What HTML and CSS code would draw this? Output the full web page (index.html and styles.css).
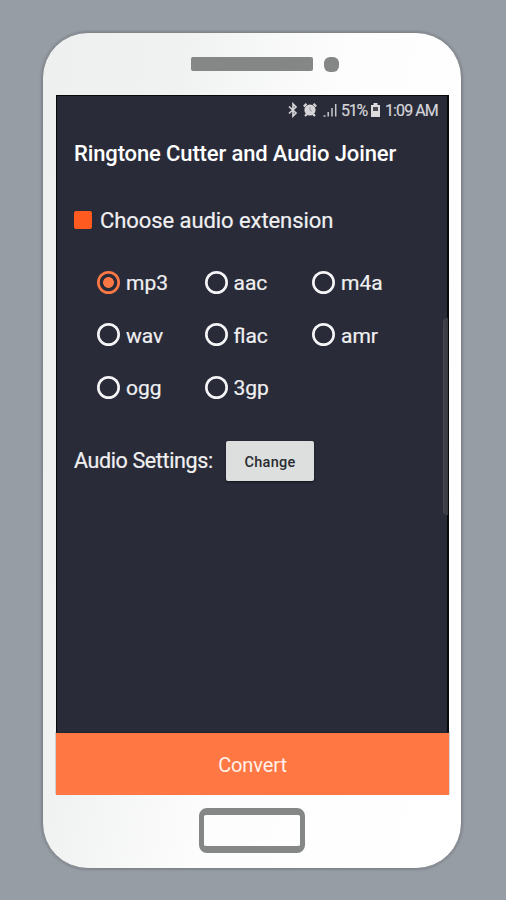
FILE: index.html
```html
<!DOCTYPE html>
<html lang="en">
<head>
<meta charset="utf-8">
<title>Ringtone Cutter and Audio Joiner</title>
<link rel="stylesheet" href="styles.css">
</head>
<body>
<div class="phone">
  <div class="earpiece"><span class="speaker"></span><span class="camera"></span></div>
  <div class="screen">
    <div class="status">
      <svg class="bt" width="10" height="16" viewBox="0 0 10 16"><path d="M1 4.5 8 11 5 14V2L8 5 1 11.5" fill="none" stroke="#d5d5d8" stroke-width="1.7"/></svg>
      <svg class="alarm" width="14" height="14" viewBox="0 0 14 14"><circle cx="7" cy="7" r="5.6" fill="#d5d5d8"/><path d="M.8 3.5 3.5.8M13.2 3.5 10.5.8M2 13l2-2M12 13l-2-2" stroke="#d5d5d8" stroke-width="2.2"/><path d="M7 4v3.2l2 1.2" fill="none" stroke="#9a9ba2" stroke-width="1"/></svg>
      <svg class="signal" width="14" height="14" viewBox="0 0 14 14"><path d="M.5 13h2M5.2 13.500V9M9 13.500V5M12.700 13.500V1" fill="none" stroke="#c8c8cc" stroke-width="1.5"/></svg>
      <span class="percent">51%</span>
      <svg class="battery" width="9" height="14" viewBox="0 0 9 14"><path d="M2.500 0h4v2H9v12H0V2h2.500z" fill="#dcdcdf"/><path d="M2 4h5v4H2z" fill="#4d4e58"/></svg>
      <span class="time">1:09 AM</span>
    </div>
    <h1 class="title"><span>Ringtone Cutter and Audio Joiner</span></h1>
    <div class="heading"><i class="square"></i><span>Choose audio extension</span></div>
    <div class="options">
      <div class="option selected"><i></i><span>mp3</span></div>
      <div class="option"><i></i><span>aac</span></div>
      <div class="option"><i></i><span>m4a</span></div>
      <div class="option"><i></i><span>wav</span></div>
      <div class="option"><i></i><span>flac</span></div>
      <div class="option"><i></i><span>amr</span></div>
      <div class="option"><i></i><span>ogg</span></div>
      <div class="option"><i></i><span>3gp</span></div>
    </div>
    <div class="settings"><span>Audio Settings:</span><button class="change">Change</button></div>
    <button class="convert">Convert</button>
    <div class="edge-panel"></div>
  </div>
  <div class="home"></div>
</div>
</body>
</html>
```
FILE: styles.css
```css
* { box-sizing: border-box; }
body {
  margin: 0;
  height: 900px;
  padding: 32px 0 0 42px;
  overflow: hidden;
  background: #979da5;
  font-family: Roboto, "Liberation Sans", sans-serif;
  color: #f0f0f2;
}
.phone {
  width: 420px;
  height: 837px;
  border: 1px solid #81858a;
  border-radius: 46px;
  background: linear-gradient(100deg, #edf0ef 0%, #f0f2f1 25%, #fdfdfd 55%, #fff 100%);
  box-shadow: 0 0 3px #666b72;
  display: flex;
  flex-direction: column;
  padding-left: 13px;
}
.earpiece {
  height: 62px;
  display: flex;
  gap: 11px;
  padding: 24px 0 0 135px;
}
.speaker { width: 122px; height: 14px; border-radius: 2px; background: #858686; }
.camera { width: 15px; height: 15px; border-radius: 6px; background: #858686; }
.screen {
  position: relative;
  width: 393px;
  height: 700px;
  background: #292b38;
  border: 1px solid #08080c;
  border-width: 1px 2px 0 1px;
  display: flex;
  flex-direction: column;
}
.status {
  height: 28px;
  display: flex;
  align-items: center;
  padding-left: 231px;
  font-size: 16px;
  color: #d5d5d8;
  white-space: nowrap;
}
.status svg { flex: none; }
.alarm { margin-left: 5px; }
.signal { margin-left: 6px; }
.percent { width: 27px; margin-left: 4px; letter-spacing: -1.3px; -webkit-text-stroke: .2px; }
.battery { margin-left: 3px; }
.time { margin-left: 5px; letter-spacing: -.9px; -webkit-text-stroke: .2px; }
.title {
  margin: 0;
  height: 58px;
  padding: 17px 0 0 17px;
  font-size: 22px;
  line-height: 26px;
  font-weight: 500;
  letter-spacing: -.13px;
  color: #fff;
  white-space: nowrap;
}
.heading {
  height: 75px;
  padding-left: 17px;
  display: flex;
  align-items: center;
  gap: 8px;
  font-size: 22px;
  letter-spacing: -.07px;
  white-space: nowrap;
}
.heading span, .option span { padding-top: 2px; -webkit-text-stroke: .2px; }
.square { width: 18px; height: 18px; border-radius: 2px; background: #ff5a1f; }
.options {
  display: grid;
  grid-template-columns: repeat(3, 107.5px);
  grid-auto-rows: 52.5px;
  padding-left: 40px;
  margin-top: -1px;
}
.option { display: flex; align-items: center; gap: 6px; font-size: 21px; }
.option i {
  width: 23px;
  height: 23px;
  border-radius: 50%;
  background: radial-gradient(circle, transparent 8.4px, #f4f4f6 9.2px);
}
.option.selected i {
  background: radial-gradient(circle, #fb7845 5px, transparent 5.8px, transparent 8.4px, #fb7845 9.2px);
}
.settings {
  margin-top: 27px;
  height: 41px;
  padding-left: 17px;
  display: flex;
  gap: 12px;
  font-size: 21.5px;
  line-height: 39px;
  letter-spacing: -.38px;
  white-space: nowrap;
}
.settings span { width: 140px; -webkit-text-stroke: .2px; }
.change {
  width: 88px;
  height: 40px;
  padding: 3px 0 0;
  border: 0;
  border-radius: 2px;
  background: #dcdfde;
  box-shadow: 0 1px 2px #12131a;
  color: #292b31;
  font: 500 14.5px Roboto, sans-serif;
  letter-spacing: .3px;
}
.convert {
  margin: auto -2px 0 -1px;
  height: 62px;
  padding: 2px 0 0;
  border: 0;
  background: #ff7844;
  box-shadow: 0 -1px 1px #20232c;
  color: #fff1eb;
  font: 20px Roboto, sans-serif;
  letter-spacing: -.1px;
}
.edge-panel {
  position: absolute;
  right: -1px;
  top: 222px;
  width: 5px;
  height: 197px;
  border-radius: 4px 0 0 4px;
  background: linear-gradient(90deg, #44454c, #36373f);
}
.home {
  width: 106px;
  height: 45px;
  margin: 13px 0 0 143px;
  border: solid #858686;
  border-width: 7px 5px;
  border-radius: 8px;
}
```
